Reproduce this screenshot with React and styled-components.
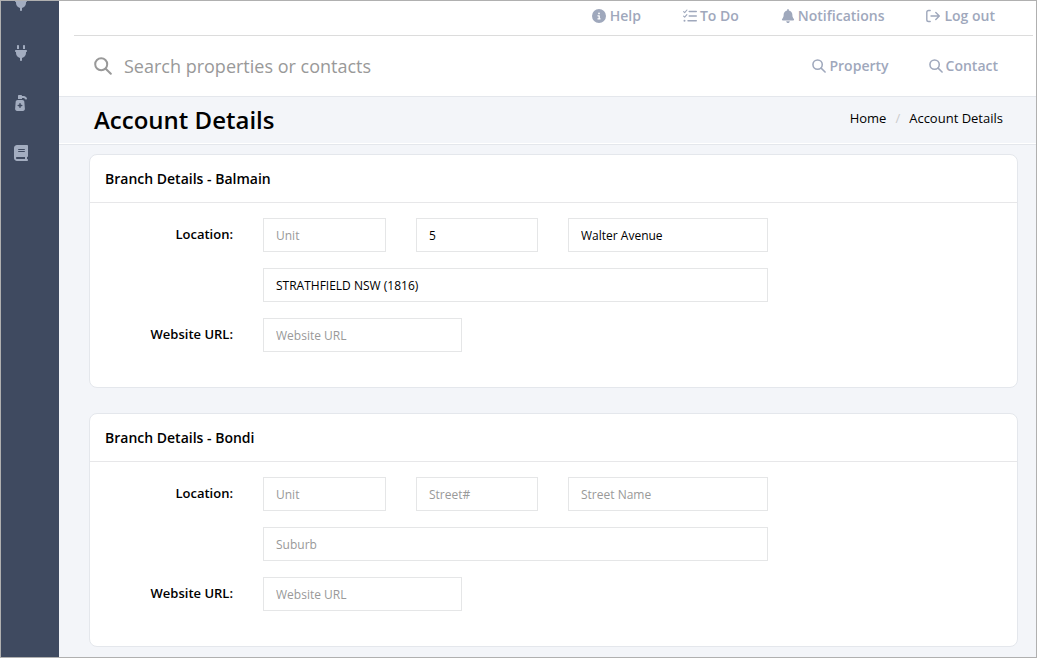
import React from "react";
import styled, { createGlobalStyle } from "styled-components";
import { FaCircleInfo, FaBell, FaPlug, FaPumpMedical, FaBook } from "react-icons/fa6";

const GlobalStyle = createGlobalStyle`
  *, *::before, *::after { box-sizing: border-box; }
  body {
    margin: 0;
    color: #000;
    background: #f3f5f9;
    font-family: "Open Sans", "Noto Sans", sans-serif;
    font-size: 13px;
    line-height: 20px;
  }
`;

const Frame = styled.div`
  display: flex;
  min-height: 100vh;
  border: 1px solid #b0b0b0;
`;

const Sidebar = styled.nav`
  flex: 0 0 58px;
  overflow: hidden;
  background: #3f4a60;
`;

const SideList = styled.ul`
  list-style: none;
  margin: -23px 0 0;
  padding: 0;
`;

const SideLink = styled.a`
  display: flex;
  align-items: center;
  justify-content: center;
  width: 40px;
  height: 50px;
  color: #a3adc0;
  font-size: 16px;
`;

const Main = styled.main`
  flex: 1;
  min-width: 0;
`;

const Header = styled.header`
  background: #fff;
  border-bottom: 1px solid #e4e7ec;
`;

const TopNav = styled.nav`
  display: flex;
  justify-content: flex-end;
  gap: 42px;
  height: 35px;
  margin: 0 3px 0 15px;
  padding: 5px 38px 0 0;
  border-bottom: 1px solid #dcdcdc;
`;

const NavLink = styled.a`
  display: inline-flex;
  align-items: center;
  gap: ${(p) => p.$gap || 3}px;
  height: 20px;
  color: #9fa8bc;
  font-size: 14px;
  font-weight: 600;
  text-decoration: none;
  white-space: nowrap;
  svg { flex: none; }
`;

const SearchRow = styled.form`
  display: flex;
  align-items: center;
  height: 60px;
  padding: 0 38px 0 35px;
  color: #999;
`;

const SearchInput = styled.input`
  flex: 1;
  min-width: 0;
  height: 40px;
  padding: 0 0 0 12px;
  border: 0;
  outline: 0;
  background: transparent;
  color: #000;
  font: 18px "Open Sans", "Noto Sans", sans-serif;
  &::placeholder { color: #999; opacity: 1; }
`;

const SearchLinks = styled.div`
  display: flex;
  gap: 40px;
`;

const TitleBar = styled.div`
  display: flex;
  align-items: center;
  justify-content: space-between;
  height: 48px;
  padding: 0 33px 2px 35px;
  border-bottom: 1px solid #e4e7ec;
  box-shadow: inset 0 -1px #fff;
`;

const PageTitle = styled.h1`
  margin: 0;
  font-size: 24px;
  font-weight: 600;
  line-height: 32px;
`;

const Crumbs = styled.nav`
  display: flex;
  gap: 9px;
  padding-bottom: 4px;
`;

const Crumb = styled.a`
  color: #000;
  text-decoration: none;
`;

const Slash = styled.span`
  color: #ccc;
`;

const Cards = styled.div`
  display: flex;
  flex-direction: column;
  gap: 25px;
  padding: 9px 18px 10px 30px;
`;

const Card = styled.section`
  background: #fff;
  border: 1px solid #e4e7ec;
  border-radius: 8px;
`;

const CardTitle = styled.h2`
  margin: 0;
  padding: 14px 15px 13px;
  border-bottom: 1px solid #e7e7e9;
  font-size: 14px;
  font-weight: 600;
  line-height: 20px;
`;

const CardBody = styled.div`
  display: flex;
  flex-direction: column;
  gap: 16px;
  padding: 15px 15px 35px;
`;

const FormRow = styled.div`
  display: flex;
  gap: 30px;
`;

const Label = styled.label`
  flex: 0 0 128px;
  padding-top: 6px;
  font-weight: 600;
  text-align: right;
`;

const Fields = styled.div`
  flex: 0 1 505px;
  display: grid;
  grid-template-columns: 123fr 122fr 200fr;
  gap: 16px 30px;
`;

const TextInput = styled.input`
  width: 100%;
  min-width: 0;
  height: 34px;
  padding: 0 12px;
  border: 1px solid #e5e6e7;
  border-radius: 0;
  outline: 0;
  background: #fff;
  color: #000;
  font: 12px "Open Sans", "Noto Sans", sans-serif;
  grid-column: ${(p) => (p.$full ? "1 / -1" : "auto")};
  &::placeholder { color: #999; opacity: 1; }
`;

const WebsiteField = styled.div`
  flex: 0 1 199px;
`;

const SearchIcon = ({ size = 14, stroke = 2 }) => (
  <svg width={size} height={size} viewBox="0 0 18 18" fill="none" stroke="currentColor" strokeWidth={stroke} strokeLinecap="round" aria-hidden="true">
    <circle cx="7.2" cy="7.2" r="6" />
    <path d="M11.7 11.7L16.8 16.8" />
  </svg>
);

const ListCheckIcon = () => (
  <svg width="14" height="14" viewBox="0 0 14 14" fill="none" stroke="currentColor" strokeLinecap="round" strokeLinejoin="round" aria-hidden="true">
    <path strokeWidth="1.1" d="M.6 2.6L1.7 3.6L3.9 1M.6 7.2L1.7 8.2L3.9 5.6" />
    <path strokeWidth="1.4" d="M6.2 2.5H13.3M6.2 7H13.3M5 11.7H13.3" />
    <circle cx="1.5" cy="11.7" r="1" fill="currentColor" stroke="none" />
  </svg>
);

const LogoutIcon = () => (
  <svg width="14" height="14" viewBox="0 0 14 14" fill="none" stroke="currentColor" strokeWidth="1.4" strokeLinecap="round" strokeLinejoin="round" aria-hidden="true">
    <path d="M4.2 1.5H2.6Q.8 1.5 .8 3.3V10.7Q.8 12.5 2.6 12.5H4.2" />
    <path d="M5 7H13.2M9.8 3.5L13.3 7L9.8 10.5" />
  </svg>
);

const sideItems = [
  { name: "Connections", Icon: FaPlug },
  { name: "Integrations", Icon: FaPlug },
  { name: "Maintenance", Icon: FaPumpMedical },
  { name: "Guide", Icon: FaBook },
];

const branches = [
  { id: "balmain", name: "Balmain", street: "5", streetName: "Walter Avenue", suburb: "STRATHFIELD NSW (1816)" },
  { id: "bondi", name: "Bondi", street: "", streetName: "", suburb: "" },
];

function BranchCard({ branch }) {
  const { id, name, street, streetName, suburb } = branch;
  return (
    <Card>
      <CardTitle>Branch Details - {name}</CardTitle>
      <CardBody>
        <FormRow>
          <Label htmlFor={`${id}-unit`}>Location:</Label>
          <Fields>
            <TextInput id={`${id}-unit`} placeholder="Unit" />
            <TextInput aria-label="Street number" placeholder="Street#" defaultValue={street} />
            <TextInput aria-label="Street name" placeholder="Street Name" defaultValue={streetName} />
            <TextInput $full aria-label="Suburb" placeholder="Suburb" defaultValue={suburb} />
          </Fields>
        </FormRow>
        <FormRow>
          <Label htmlFor={`${id}-url`}>Website URL:</Label>
          <WebsiteField>
            <TextInput id={`${id}-url`} placeholder="Website URL" />
          </WebsiteField>
        </FormRow>
      </CardBody>
    </Card>
  );
}

export default function App() {
  return (
    <>
      <GlobalStyle />
      <Frame>
        <Sidebar>
          <SideList>
            {sideItems.map(({ name, Icon }) => (
              <li key={name}>
                <SideLink href="#" aria-label={name}><Icon /></SideLink>
              </li>
            ))}
          </SideList>
        </Sidebar>
        <Main>
          <Header>
            <TopNav>
              <NavLink href="#" $gap={4}><FaCircleInfo />Help</NavLink>
              <NavLink href="#"><ListCheckIcon />To Do</NavLink>
              <NavLink href="#"><FaBell size={14} />Notifications</NavLink>
              <NavLink href="#" $gap={4}><LogoutIcon />Log out</NavLink>
            </TopNav>
            <SearchRow>
              <SearchIcon size={18} />
              <SearchInput aria-label="Search" placeholder="Search properties or contacts" />
              <SearchLinks>
                <NavLink href="#"><SearchIcon />Property</NavLink>
                <NavLink href="#"><SearchIcon />Contact</NavLink>
              </SearchLinks>
            </SearchRow>
          </Header>
          <TitleBar>
            <PageTitle>Account Details</PageTitle>
            <Crumbs aria-label="Breadcrumb">
              <Crumb href="#">Home</Crumb>
              <Slash>/</Slash>
              <Crumb href="#">Account Details</Crumb>
            </Crumbs>
          </TitleBar>
          <Cards>
            {branches.map((b) => <BranchCard key={b.id} branch={b} />)}
          </Cards>
        </Main>
      </Frame>
    </>
  );
}
